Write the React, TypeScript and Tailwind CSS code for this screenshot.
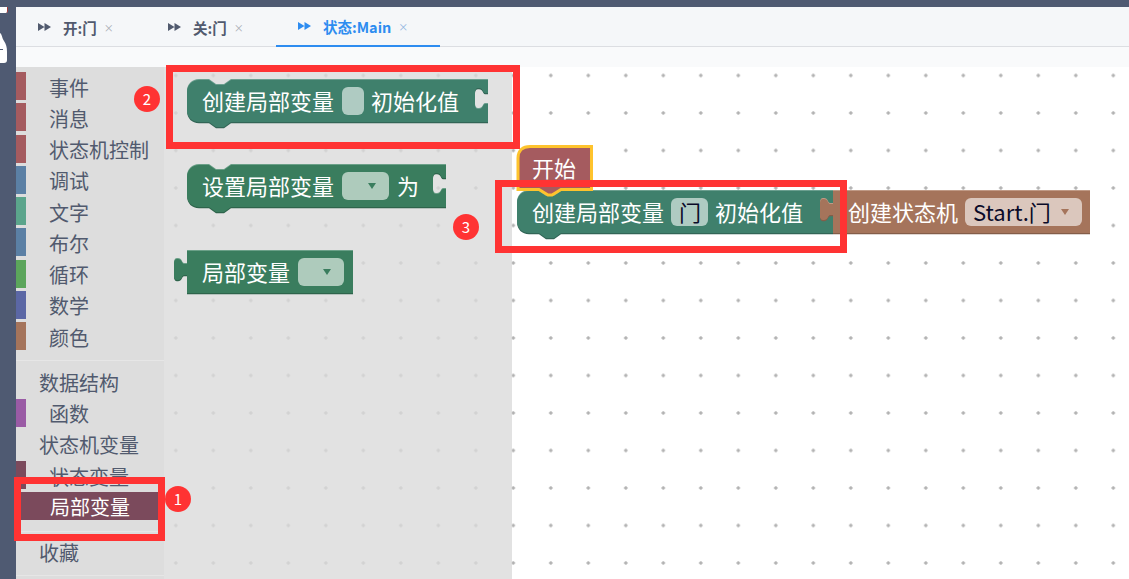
import { ReactNode } from "react";

const FONT = "font-['Noto_Sans_CJK_SC','Noto_Sans',sans-serif]";

type ToolRow = { label: string; color?: string; indent?: boolean; active?: boolean };

const group1: ToolRow[] = [
  { label: "事件", color: "bg-[#a55b5f]", indent: true },
  { label: "消息", color: "bg-[#a55b5f]", indent: true },
  { label: "状态机控制", color: "bg-[#a55b5f]", indent: true },
  { label: "调试", color: "bg-[#5b80a5]", indent: true },
  { label: "文字", color: "bg-[#5ba58c]", indent: true },
  { label: "布尔", color: "bg-[#5b80a5]", indent: true },
  { label: "循环", color: "bg-[#5ba55b]", indent: true },
  { label: "数学", color: "bg-[#5b67a5]", indent: true },
  { label: "颜色", color: "bg-[#a5745b]", indent: true },
];

const group2: ToolRow[] = [
  { label: "数据结构" },
  { label: "函数", color: "bg-[#9a5ba5]", indent: true },
  { label: "状态机变量" },
  { label: "状态变量", color: "bg-[#7b4a5c]", indent: true },
  { label: "局部变量", indent: true, active: true },
];

function Row({ row }: { row: ToolRow }) {
  return (
    <div className="flex h-[31.25px] items-center">
      <div className={`h-[28px] w-[10px] shrink-0 ${row.active ? "" : row.color ?? ""}`} />
      {row.active ? (
        <div className="ml-[-5px] flex h-[28px] w-[137px] items-center bg-[#7b4a5c] pl-[29px] pt-[1px] text-white">
          {row.label}
        </div>
      ) : (
        <div className={`pt-[3px] ${row.indent ? "pl-[23px]" : "pl-[13px]"}`}>{row.label}</div>
      )}
    </div>
  );
}

function Toolbox() {
  return (
    <div className="h-[512px] w-[148px] shrink-0 overflow-hidden bg-[#dddddd] pt-[3.5px] text-[20px] leading-none text-[#515a6e]">
      {group1.map((r) => (
        <Row key={r.label} row={r} />
      ))}
      <div className="mb-[5px] mt-[8px] h-px bg-[#e6e6e6]" />
      {group2.map((r) => (
        <Row key={r.label} row={r} />
      ))}
      <div className="mb-[4px] mt-[9px] h-px bg-[#e6e6e6]" />
      <Row row={{ label: "收藏" }} />
      <div className="mt-[8px] h-px bg-[#e6e6e6]" />
    </div>
  );
}

function Tab({ label, active, width }: { label: string; active?: boolean; width: string }) {
  return (
    <div
      className={`flex h-[40px] items-center pl-[22px] ${width} ${
        active ? "border-b-2 border-[#2d8cf0] text-[#2d8cf0]" : "text-[#515a6e]"
      }`}
    >
      <svg width="13" height="8" viewBox="0 0 13 8" className="shrink-0">
        <path d="M0 0 L6.5 4 L0 8 Z M6.5 0 L13 4 L6.5 8 Z" fill="currentColor" />
      </svg>
      <span className="ml-[12px] pt-[2px] text-[14.5px] font-bold">{label}</span>
      <span className={`ml-[7px] pt-[1px] text-[10px] ${active ? "text-[#8fb4e0]" : "text-[#a8acb4]"}`}>×</span>
    </div>
  );
}

function DotGrid() {
  return (
    <svg className="absolute inset-0 h-full w-full">
      <defs>
        <pattern id="gridFly" x="347.3" y="5.5" width="37.5" height="37.5" patternUnits="userSpaceOnUse">
          <path d="M0 2 H4 M2 0 V4" stroke="#cdcdcd" strokeWidth="1" />
        </pattern>
        <pattern id="gridWork" x="347.3" y="5.5" width="37.5" height="37.5" patternUnits="userSpaceOnUse">
          <path d="M0 2 H4 M2 0 V4" stroke="#999999" strokeWidth="1" />
        </pattern>
      </defs>
      <rect width="348" height="100%" fill="url(#gridFly)" />
      <rect x="348" width="100%" height="100%" fill="url(#gridWork)" />
    </svg>
  );
}

// block outline: optional top notch, rounded left, optional right socket / left tab
function blockPath(w: number, opts: { notch?: boolean; socket?: boolean; tab?: boolean }) {
  const h = 42;
  const top = opts.notch ? `M12 0 H22 L29 5 H37 L44 0 H${w}` : `M0 0 H${w}`;
  const right = opts.socket
    ? `V13 H${w - 3} C${w - 5} 13 ${w - 5} 8 ${w - 9} 8 H${w - 10} C${w - 12} 8 ${w - 13} 10 ${w - 13} 12 V25 C${w - 13} 27 ${w - 12} 29 ${w - 10} 29 H${w - 9} C${w - 5} 29 ${w - 5} 24 ${w - 3} 24 H${w} V${h}`
    : `V${h}`;
  const bottom = opts.notch
    ? `H44 L37 ${h + 5} H29 L22 ${h} H12 C5 ${h} 0 ${h - 5} 0 ${h - 12} V12 C0 5 5 0 12 0 Z`
    : opts.tab
    ? `H0 V24 H-3 C-5 24 -5 29 -9 29 H-10 C-12 29 -13 27 -13 25 V12 C-13 10 -12 8 -10 8 H-9 C-5 8 -5 13 -3 13 H0 V0 Z`
    : `H0 V0 Z`;
  return `${top} ${right} ${bottom}`;
}

function Shape({
  width,
  fill,
  light,
  dark,
  notch,
  socket,
  tab,
  className,
  children,
}: {
  width: number;
  fill: string;
  light: string;
  dark: string;
  notch?: boolean;
  socket?: boolean;
  tab?: boolean;
  className: string;
  children: ReactNode;
}) {
  const d = blockPath(width, { notch, socket, tab });
  return (
    <div className={`absolute flex h-[44px] items-center text-[22px] leading-none text-white ${className}`} style={{ width }}>
      <svg className="absolute left-[-14px] top-[-1px] overflow-visible" width={width + 15} height={52}>
        <g transform="translate(14 2)">
          <path d={d} fill={dark} transform="translate(0 1.2)" />
          <path d={d} fill={light} transform="translate(0 -1)" />
          <path d={d} fill={fill} />
        </g>
      </svg>
      <div className="relative flex items-center pl-[15px]">{children}</div>
    </div>
  );
}

function Label({ children, className = "" }: { children: ReactNode; className?: string }) {
  return <span className={`pb-[2px] ${className}`}>{children}</span>;
}

function Field({ className, text, arrow, arrowColor }: { className: string; text?: string; arrow?: boolean; arrowColor?: string }) {
  return (
    <span className={`flex h-[28px] shrink-0 items-center rounded-[6px] ${className}`}>
      {text && <span className="ml-[8px] pb-[2px] text-[#0a0a28]">{text}</span>}
      {arrow && <span className={`ml-auto mr-[13px] h-0 w-0 border-x-[4px] border-t-[6px] border-x-transparent ${arrowColor ?? "border-t-[#3a7d5e]"}`} />}
    </span>
  );
}

function Annotation({ className }: { className: string }) {
  return <div className={`absolute border-[7px] border-[#ff3333] ${className}`} />;
}

function Badge({ n, className }: { n: number; className: string }) {
  return (
    <div className={`absolute flex h-[26px] w-[26px] items-center justify-center rounded-full bg-[#ff3333] text-[15px] text-white ${className}`}>
      {n}
    </div>
  );
}

export default function App() {
  return (
    <div className={`relative h-[579px] w-[1129px] overflow-hidden bg-white ${FONT}`}>
      <div className="h-[7px] bg-[#4f5a72]" />
      <div className="flex">
        <div className="relative h-[572px] w-[16px] shrink-0 overflow-hidden bg-[#4f5a72]">
          <div className="absolute left-0 top-[-7px] h-[13px] w-[8px] rounded-br-[2px] border-r border-[#a33a3a] bg-white" />
          <svg className="absolute left-0 top-[25px]" width="8" height="32">
            <path d="M0 1 C2 2 2 6 4 9 C6 12 7 15 7 20 V28 C7 30 6 31 4 31 H0 Z" fill="#ffffff" />
            <path d="M0 17.5 H3" stroke="#4f5a72" strokeWidth="1" />
          </svg>
        </div>
        <div className="min-w-0 flex-1">
          <div className="flex h-[40px] border-b border-[#dcdee2] bg-[#f5f7f9]">
            <Tab label="开:门" width="w-[130px]" />
            <Tab label="关:门" width="w-[130px]" />
            <Tab label="状态:Main" active width="w-[164px]" />
          </div>
          <div className="h-[20px] bg-[#f9fafb]" />
          <div className="flex h-[512px]">
            <Toolbox />
            <div className="w-[348px] shrink-0 bg-[#e2e2e2]" />
            <div className="flex-1 bg-white" />
          </div>
        </div>
      </div>

      <div className="absolute inset-x-0 bottom-0 left-[164px] top-[68px]">
        <DotGrid />
      </div>

      <Shape width={301} notch socket fill="#3f806c" light="#6b9f8f" dark="#326556" className="left-[187px] top-[79px]">
        <Label>创建局部变量</Label>
        <Field className="ml-[8px] w-[22px] bg-[#afcbc2]" />
        <Label className="ml-[7px]">初始化值</Label>
      </Shape>

      <Shape width={259} notch socket fill="#3a7d5e" light="#6ba088" dark="#2e644b" className="left-[187px] top-[164px]">
        <Label>设置局部变量</Label>
        <Field className="ml-[8px] w-[47px] bg-[#aecbbc]" arrow />
        <Label className="ml-[8px]">为</Label>
      </Shape>

      <Shape width={166} tab fill="#3a7d5e" light="#6ba088" dark="#2e644b" className="left-[187px] top-[250px]">
        <Label>局部变量</Label>
        <Field className="ml-[8px] w-[46px] bg-[#aecbbc]" arrow />
      </Shape>

      <Shape width={316} notch fill="#3f806c" light="#6b9f8f" dark="#326556" className="left-[517px] top-[190px]">
        <Label>创建局部变量</Label>
        <Field className="ml-[7px] w-[37px] bg-[#afcbc2]" text="门" />
        <Label className="ml-[7px]">初始化值</Label>
      </Shape>

      <Shape width={257} fill="#a5745b" light="#c09a86" dark="#845d49" tab className="left-[833px] top-[190px]">
        <Label>创建状态机</Label>
        <Field className="ml-[7px] w-[117px] bg-[#dbc7bd]" text="Start.门" arrow arrowColor="border-t-[#a5745b]" />
      </Shape>

      <svg className="absolute left-[515px] top-[143px]" width="82" height="56">
        <path
          d="M3 15 C3 7 8 3.5 15 3.5 H76.5 V46.5 H46 L37 52 H33 L24 46.5 H3 Z"
          fill="#a55b5f"
          stroke="#fec32d"
          strokeWidth="3"
        />
      </svg>
      <div className="absolute left-[532px] top-[156px] text-[22px] leading-none text-white">开始</div>

      <Annotation className="left-[166px] top-[65px] h-[84px] w-[354px]" />
      <Annotation className="left-[495px] top-[180px] h-[73px] w-[352px]" />
      <Annotation className="left-[14px] top-[477px] h-[64px] w-[151px]" />
      <Badge n={1} className="left-[165px] top-[486px]" />
      <Badge n={2} className="left-[134px] top-[86px]" />
      <Badge n={3} className="left-[453px] top-[214px]" />
    </div>
  );
}
